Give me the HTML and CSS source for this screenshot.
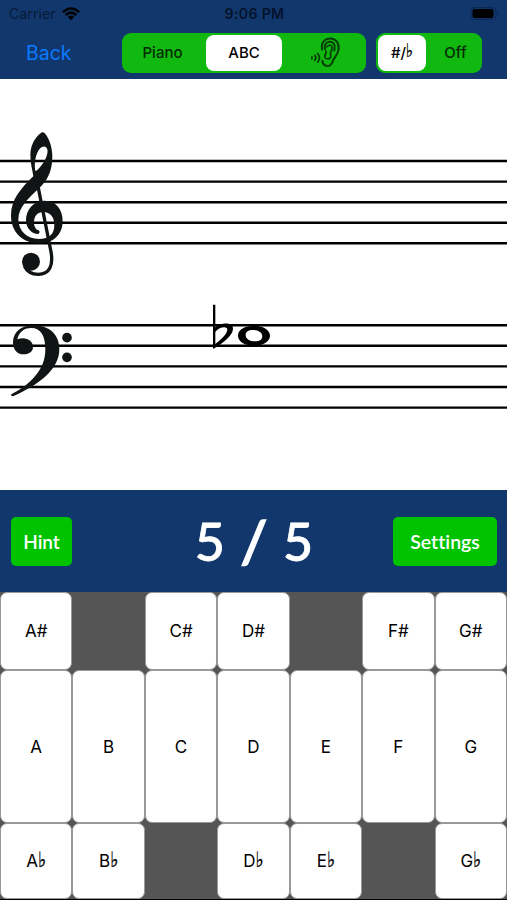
FILE: index.html
```html
<!DOCTYPE html>
<html lang="en">
<head>
    <meta charset="UTF-8">
    <meta name="viewport" content="width=device-width, initial-scale=1.0">
    <title>Note Trainer</title>
    <link rel="stylesheet" href="styles.css">
</head>
<body>
    <header class="top-bar">
        <div class="status-bar">
            <div class="carrier">
                <span>Carrier</span>
                <svg class="wifi" viewBox="0 0 18 14" width="18" height="14">
                    <path d="M1 5.2 Q9 -2.2 17 5.2 M3.7 8 Q9 3.2 14.3 8" fill="none" stroke="#000" stroke-width="2.5"/>
                    <path d="M5.8 10 Q9 7.2 12.2 10 L9 13.3 Z"/>
                </svg>
            </div>
            <div class="clock">9:06 PM</div>
            <svg class="battery" viewBox="0 0 30 13" width="30" height="13">
                <rect x="1" y="0.7" width="25" height="11.6" rx="3.5" fill="none" stroke="#0a2650"/>
                <rect x="2.5" y="2" width="21" height="9" rx="2"/>
                <path d="M27.5 4.5 Q30 6.5 27.5 8.5 Z" fill="#0a2650"/>
            </svg>
        </div>
        <nav class="nav-bar">
            <a class="back">Back</a>
            <div class="segmented modes">
                <button class="segment">Piano</button>
                <button class="segment selected">ABC</button>
                <button class="segment">
                    <svg class="ear" viewBox="0 0 32 32" width="31" height="31">
                        <g fill="none" stroke="#063d06" stroke-width="2.1" stroke-linecap="round">
                            <path d="M12.5 13 C11 5 16 1.6 21 1.6 C27 1.6 30.2 6.5 29.5 12.5 C28.8 19 25 20.5 23.5 25 C22.5 29 19.5 30.8 16 29.5 C13.5 28.5 12.8 26.5 12.8 24.5"/>
                            <path d="M15.5 12.5 C14.2 7 18 4.6 21 5 C25.5 5.5 26.2 10 25 14"/>
                            <path d="M17.5 10 Q22 6.5 22.8 11 C23.2 14 20.3 15 21.2 18 C22.2 22 19 24 15.8 21.5 C13.5 19.5 18 17.5 16.3 14.5" stroke-width="1.8"/>
                            <path d="M2 20.5 v2 M5 19 Q7 21.5 5 24 M8 17 Q11.5 21.5 8 26" stroke-width="1.8"/>
                        </g>
                    </svg>
                </button>
            </div>
            <div class="segmented accidentals">
                <button class="segment selected">#/<span class="flat">♭</span></button>
                <button class="segment">Off</button>
            </div>
        </nav>
    </header>

    <main class="staff">
        <svg viewBox="0 79 507 411" width="507" height="411">
            <path class="lines" d="M0 161H507 M0 181.6H507 M0 202.2H507 M0 222.8H507 M0 243.3H507 M0 325.2H507 M0 345.8H507 M0 366.4H507 M0 387H507 M0 407.6H507"/>
            <!-- treble clef -->
            <g class="clef" transform="translate(0 120) scale(0.3333)">
                <path fill-rule="evenodd" d="M126 37 C109 48 91 72 91 105 C91 130 97 149 100 169 C62 206 33 239 33 287 C33 334 66 370 119 370 C161 370 188 342 188 304 C188 267 168 242 133 242 C101 242 78 269 78 300 C78 325 95 342 115 342 Q122 337 116 331 C107 329 102 318 102 308 C102 288 113 276 130 276 C150 276 163 291 163 315 C163 342 148 357 117 357 C80 357 55 332 55 298 C55 264 84 236 114 208 C143 182 157 154 157 109 C157 78 145 51 134 40 Q130 35 126 37 Z M136 80 C147 86 143 104 135 120 C127 135 117 146 107 154 C99 128 112 74 136 80 Z"/>
                <path class="stem" d="M113 194 L152 390 C162 437 148 463 115 463 C96 463 80 453 73 438"/>
                <circle cx="93" cy="425" r="27"/>
            </g>
            <!-- bass clef -->
            <g class="clef" transform="translate(0 310) scale(0.3333)">
                <path d="M34 253 C94 221 136 177 136 119 C136 78 123 54 94 54 C70 54 56 68 52 88 C77 79 99 91 99 111 C99 126 86 133 70 133 C51 133 39 117 39 98 C39 67 63 46 100 46 C149 46 178 75 178 117 C178 181 113 225 39 259 Q31 258 34 253 Z"/>
                <circle cx="201" cy="83" r="14.5"/>
                <circle cx="201" cy="142" r="14.5"/>
            </g>
            <!-- whole note with flat -->
            <g transform="translate(200 295) scale(0.3333)">
                <path fill-rule="evenodd" d="M39 29 H46 V97 C58 84 99 78 99 101 C99 123 64 147 41 161 L39 160 Z M46 111 V147 C60 136 79 121 82 105 C84 91 55 96 46 111 Z"/>
                <path fill-rule="evenodd" d="M114 122 C114 103 135 92 162 92 C188 92 210 104 210 122 C210 140 188 152 162 152 C135 152 114 140 114 122 Z M137 120 C137 132 150 139 165 139 C180 139 187 133 187 124 C187 112 174 105 158 105 C145 105 137 111 137 120 Z"/>
            </g>
        </svg>
    </main>

    <section class="score-bar">
        <button class="action hint">Hint</button>
        <div class="score">5 <span class="slash">/</span> 5</div>
        <button class="action settings">Settings</button>
    </section>

    <section class="keyboard">
        <button class="key">A#</button>
        <div class="blank"></div>
        <button class="key">C#</button>
        <button class="key">D#</button>
        <div class="blank"></div>
        <button class="key">F#</button>
        <button class="key">G#</button>

        <button class="key">A</button>
        <button class="key">B</button>
        <button class="key">C</button>
        <button class="key">D</button>
        <button class="key">E</button>
        <button class="key">F</button>
        <button class="key">G</button>

        <button class="key">A<span class="flat">♭</span></button>
        <button class="key">B<span class="flat">♭</span></button>
        <div class="blank"></div>
        <button class="key">D<span class="flat">♭</span></button>
        <button class="key">E<span class="flat">♭</span></button>
        <div class="blank"></div>
        <button class="key">G<span class="flat">♭</span></button>
    </section>
</body>
</html>
```
FILE: styles.css
```css
* {
    box-sizing: border-box;
}
body {
    margin: 0;
    width: 507px;
    height: 900px;
    overflow: hidden;
    font-family: Inter, 'Liberation Sans', sans-serif;
    color: #000;
    background: #000;
}
button {
    border: none;
    padding: 0;
    margin: 0;
    font-family: inherit;
    color: inherit;
    background: none;
}
.top-bar {
    height: 79px;
    background: #11376d;
}
.status-bar {
    display: grid;
    grid-template-columns: 1fr auto 1fr;
    align-items: center;
    height: 27px;
    padding: 0 7px 0 9px;
    font-size: 14px;
}
.carrier {
    display: flex;
    align-items: center;
    gap: 6px;
    color: #071a36;
    letter-spacing: 0.1px;
}
.clock {
    font-weight: 600;
    color: #04132b;
    letter-spacing: 0.4px;
}
.battery {
    justify-self: end;
}
.nav-bar {
    display: flex;
    align-items: center;
    height: 51px;
    padding-left: 26px;
}
.back {
    width: 96px;
    font-size: 19.5px;
    color: #0a7aff;
}
.segmented {
    display: flex;
    height: 40px;
    padding: 2px;
    border-radius: 9px;
    background: #10b810;
}
.segment {
    display: flex;
    flex: 1;
    align-items: center;
    justify-content: center;
    font-size: 15px;
    font-weight: 500;
    color: #052805;
    border-radius: 8px;
}
.segment.selected {
    color: #000;
    background: #fff;
}
.modes {
    width: 244px;
}
.modes .segment:first-child {
    padding-right: 5px;
}
.modes .segment:last-child,
.accidentals .segment:last-child {
    padding-left: 5px;
}
.modes .segment.selected {
    flex: 0 0 76px;
}
.accidentals {
    width: 106px;
    margin-left: 10px;
}
.accidentals .segment.selected {
    flex: 0 0 48px;
}
.flat {
    display: inline-block;
    font-family: 'DejaVu Sans', sans-serif;
    line-height: 1;
    transform: scaleY(1.25);
    transform-origin: 50% 80%;
    -webkit-text-stroke: 0.3px;
}
.staff {
    height: 411px;
    background: #fff;
}
.staff svg {
    display: block;
}
.lines {
    fill: none;
    stroke: #000;
    stroke-width: 2.4;
}
.clef {
    fill: #111414;
}
.stem {
    fill: none;
    stroke: #111414;
    stroke-width: 10;
}
.score-bar {
    display: grid;
    grid-template-columns: 104px 1fr 104px;
    align-items: center;
    height: 102px;
    padding: 0 10px 0 11px;
    font-family: Lato, sans-serif;
    color: #fff;
    background: #11376d;
}
.action {
    height: 49px;
    font-size: 20px;
    font-weight: 600;
    border-radius: 5px;
    background: #00c300;
}
.hint {
    width: 61px;
    font-size: 19px;
}
.settings {
    font-size: 19.5px;
    font-variant-ligatures: none;
}
.score {
    text-align: center;
    font-size: 52px;
    font-weight: 500;
    word-spacing: 4px;
    -webkit-text-stroke: 0.8px #fff;
}
.slash {
    display: inline-block;
    transform: scale(1.15, 1.12);
    -webkit-text-stroke-width: 1.3px;
}
.keyboard {
    display: grid;
    grid-template-columns: repeat(7, 1fr);
    grid-template-rows: 78px 153px 76px;
    background: #555;
}
.key {
    font-size: 17px;
    background: #fff;
    border: 1px solid #999;
    border-width: 0.5px 1px;
    border-radius: 7px;
}
```
